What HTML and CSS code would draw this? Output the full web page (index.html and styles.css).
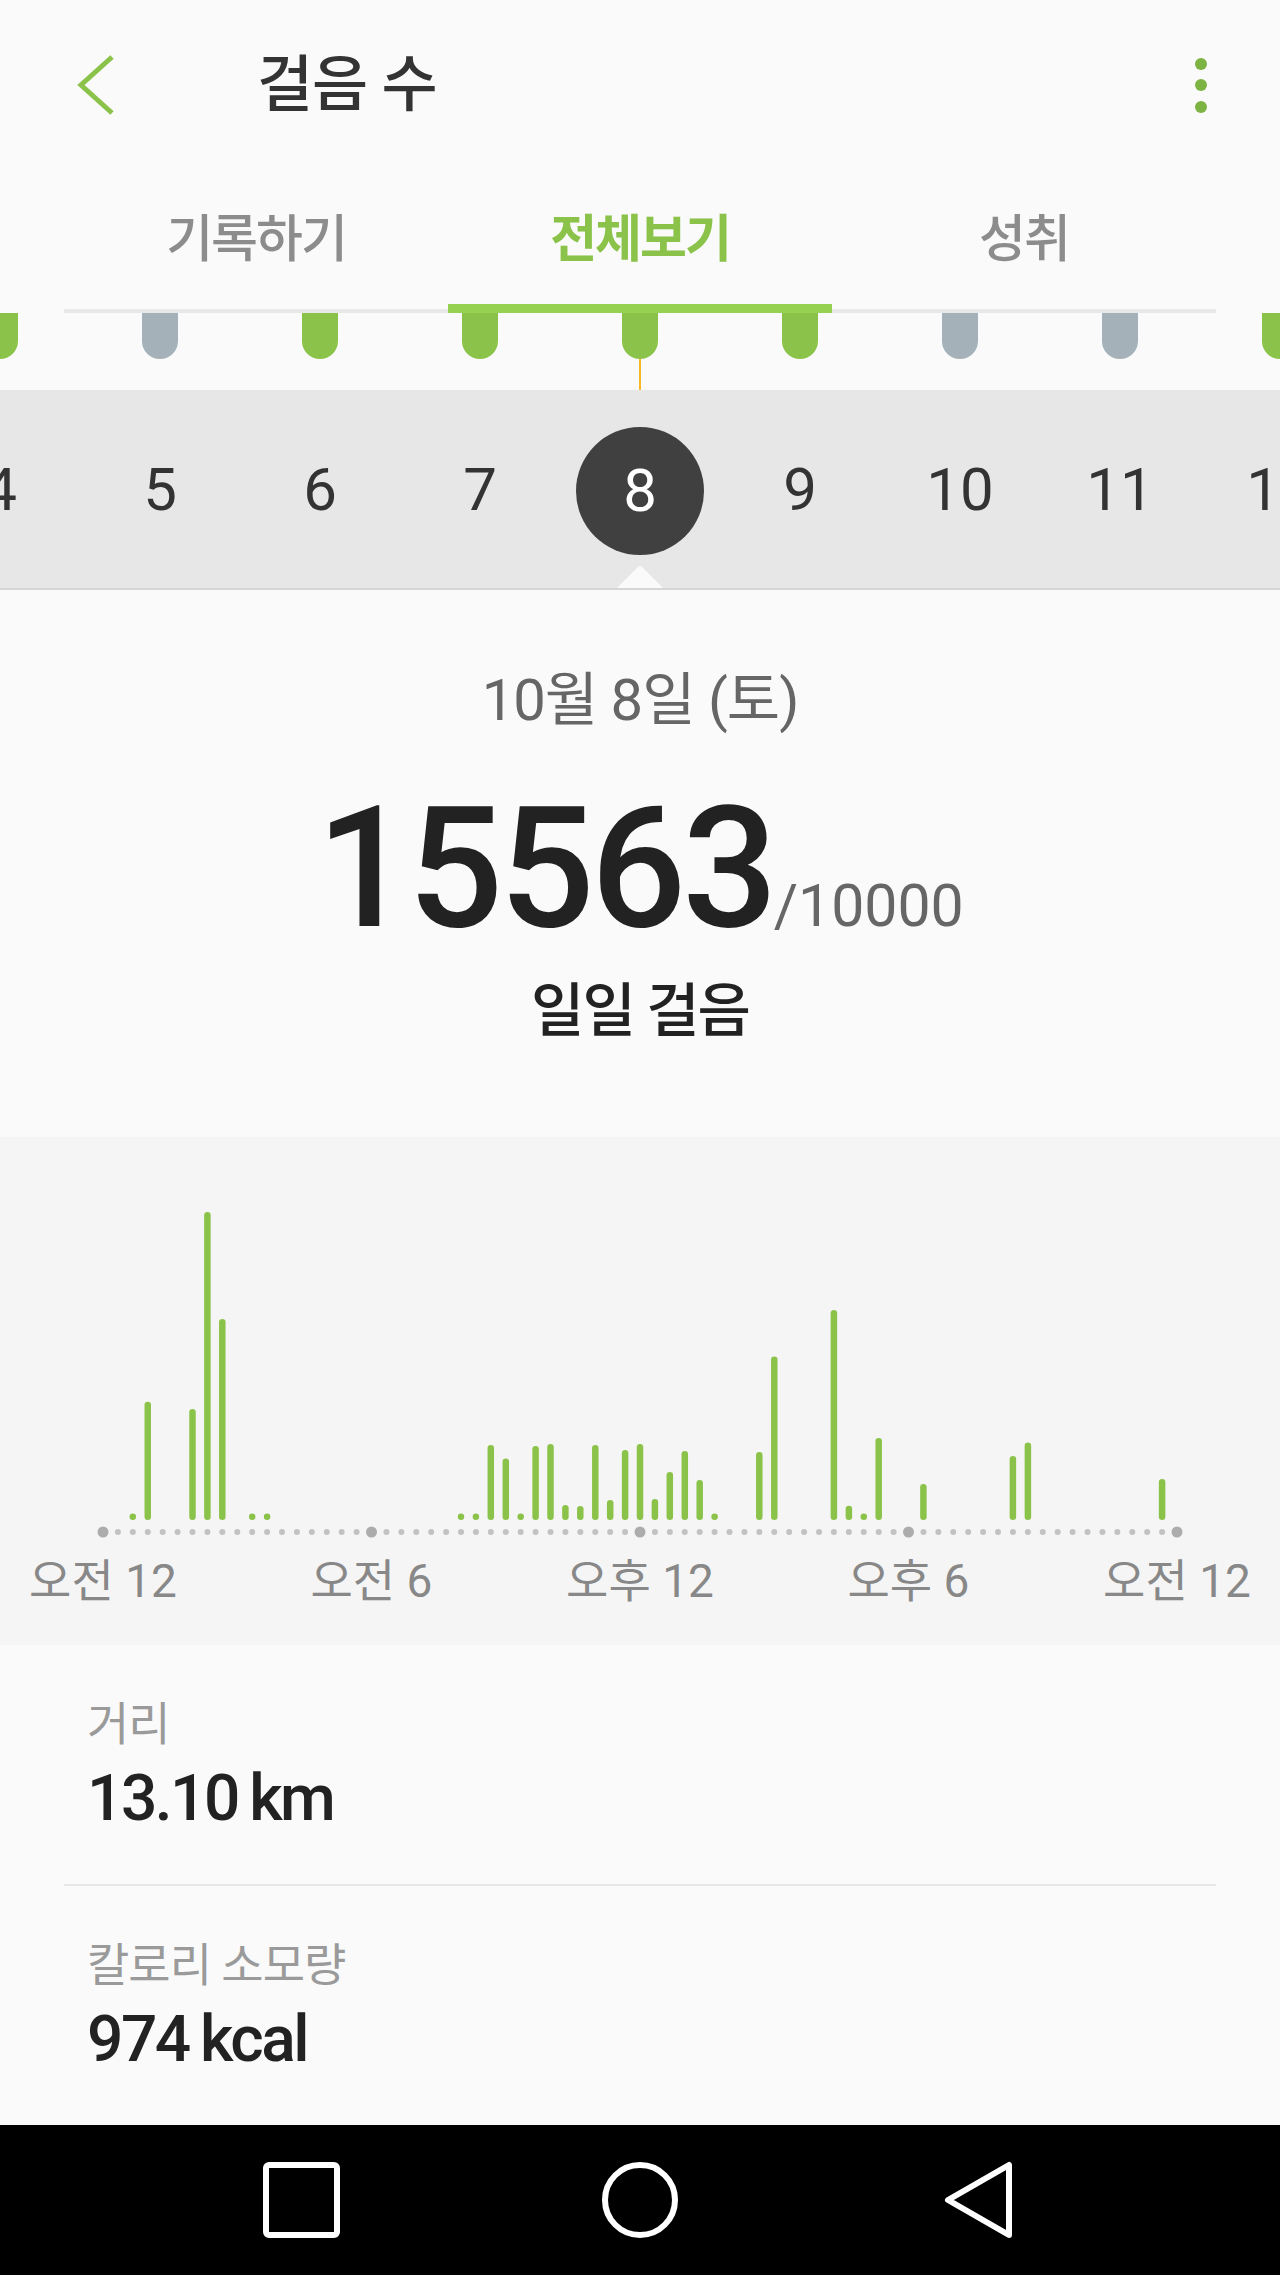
FILE: index.html
```html
<!DOCTYPE html>
<html lang="ko">
<head>
    <meta charset="UTF-8">
    <meta name="viewport" content="width=device-width, initial-scale=1.0">
    <title>걸음 수</title>
    <link rel="stylesheet" href="styles.css">
</head>
<body>
    <header class="app-bar">
        <button class="back" type="button" aria-label="뒤로">
            <svg width="40" height="64" viewBox="0 0 40 64"><polyline points="36,4 5,32 36,60" fill="none" stroke="#8bc34a" stroke-width="5"/></svg>
        </button>
        <h1 class="title">걸음 수</h1>
        <div class="menu" aria-label="더보기"><span></span><span></span><span></span></div>
    </header>

    <nav class="tabs">
        <div class="tab">기록하기</div>
        <div class="tab active">전체보기</div>
        <div class="tab">성취</div>
    </nav>

    <!-- goal markers for each day -->
    <div class="strip">
        <div class="track">
            <div class="slot"><span class="pin done"></span></div>
            <div class="slot"><span class="pin"></span></div>
            <div class="slot"><span class="pin done"></span></div>
            <div class="slot"><span class="pin done"></span></div>
            <div class="slot"><span class="pin done current"></span></div>
            <div class="slot"><span class="pin done"></span></div>
            <div class="slot"><span class="pin"></span></div>
            <div class="slot"><span class="pin"></span></div>
            <div class="slot"><span class="pin done"></span></div>
        </div>
    </div>

    <div class="days">
        <div class="track">
            <div class="day">4</div>
            <div class="day">5</div>
            <div class="day">6</div>
            <div class="day">7</div>
            <div class="day"><span class="today">8</span></div>
            <div class="day">9</div>
            <div class="day">10</div>
            <div class="day">11</div>
            <div class="day">12</div>
        </div>
    </div>

    <section class="summary">
        <div class="date">10월 8일 (토)</div>
        <div class="steps">15563<span class="goal">/10000</span></div>
        <div class="caption">일일 걸음</div>
    </section>

    <section class="chart">
        <svg width="1280" height="508" viewBox="0 0 1280 508">
            <line class="axis" x1="103" y1="395" x2="1177" y2="395"/>
            <circle class="tick" cx="103" cy="395" r="5.5"/>
            <circle class="tick" cx="371.5" cy="395" r="5.5"/>
            <circle class="tick" cx="640" cy="395" r="5.5"/>
            <circle class="tick" cx="908.5" cy="395" r="5.5"/>
            <circle class="tick" cx="1177" cy="395" r="5.5"/>

            <g class="bars">
                <circle cx="132.8" cy="379.75" r="3.25"/>
                <line x1="147.75" y1="268" x2="147.75" y2="379.75"/>
                <line x1="192.5" y1="275.25" x2="192.5" y2="379.75"/>
                <line x1="207.4" y1="78.25" x2="207.4" y2="379.75"/>
                <line x1="222.3" y1="185.25" x2="222.3" y2="379.75"/>
                <circle cx="252.2" cy="379.75" r="3.25"/>
                <circle cx="267.1" cy="379.75" r="3.25"/>
                <circle cx="461" cy="379.75" r="3.25"/>
                <circle cx="475.9" cy="379.75" r="3.25"/>
                <line x1="490.8" y1="311.25" x2="490.8" y2="379.75"/>
                <line x1="505.8" y1="324.75" x2="505.8" y2="379.75"/>
                <circle cx="520.7" cy="379.75" r="3.25"/>
                <line x1="535.6" y1="312.25" x2="535.6" y2="379.75"/>
                <line x1="550.5" y1="310.25" x2="550.5" y2="379.75"/>
                <line x1="565.4" y1="371.25" x2="565.4" y2="379.75"/>
                <line x1="580.3" y1="372.25" x2="580.3" y2="379.75"/>
                <line x1="595.3" y1="311.25" x2="595.3" y2="379.75"/>
                <line x1="610.2" y1="366.25" x2="610.2" y2="379.75"/>
                <line x1="625.1" y1="316.25" x2="625.1" y2="379.75"/>
                <line x1="640" y1="310.25" x2="640" y2="379.75"/>
                <line x1="654.9" y1="365.25" x2="654.9" y2="379.75"/>
                <line x1="669.8" y1="338.25" x2="669.8" y2="379.75"/>
                <line x1="684.8" y1="317.25" x2="684.8" y2="379.75"/>
                <line x1="699.7" y1="346.25" x2="699.7" y2="379.75"/>
                <circle cx="714.6" cy="379.75" r="3.25"/>
                <line x1="759.3" y1="318.25" x2="759.3" y2="379.75"/>
                <line x1="774.3" y1="222.75" x2="774.3" y2="379.75"/>
                <line x1="833.9" y1="176.25" x2="833.9" y2="379.75"/>
                <line x1="848.9" y1="372" x2="848.9" y2="379.75"/>
                <circle cx="863.8" cy="379.75" r="3.25"/>
                <line x1="878.7" y1="304.25" x2="878.7" y2="379.75"/>
                <line x1="923.4" y1="350.25" x2="923.4" y2="379.75"/>
                <line x1="1012.9" y1="322.25" x2="1012.9" y2="379.75"/>
                <line x1="1027.9" y1="308.85" x2="1027.9" y2="379.75"/>
                <line x1="1162.1" y1="345.25" x2="1162.1" y2="379.75"/>
            </g>

            <text class="hour" x="103" y="460">오전 12</text>
            <text class="hour" x="371.5" y="460">오전 6</text>
            <text class="hour" x="640" y="460">오후 12</text>
            <text class="hour" x="908.5" y="460">오후 6</text>
            <text class="hour" x="1177" y="460">오전 12</text>
        </svg>
    </section>

    <section class="details">
        <div class="stat">
            <div class="stat-label">거리</div>
            <div class="stat-value">13.10 km</div>
        </div>
        <div class="stat">
            <div class="stat-label">칼로리 소모량</div>
            <div class="stat-value">974 kcal</div>
        </div>
    </section>

    <footer class="nav-bar">
        <div class="nav-key">
            <svg width="80" height="80" viewBox="0 0 80 80"><rect x="4" y="5" width="71" height="70" rx="3" fill="none" stroke="#fff" stroke-width="6"/></svg>
        </div>
        <div class="nav-key">
            <svg width="80" height="80" viewBox="0 0 80 80"><circle cx="40" cy="40" r="35" fill="none" stroke="#fff" stroke-width="6"/></svg>
        </div>
        <div class="nav-key">
            <svg width="80" height="80" viewBox="0 0 80 80"><polygon points="10,40 71,5 71,75" fill="none" stroke="#fff" stroke-width="6" stroke-linejoin="round"/></svg>
        </div>
    </footer>
</body>
</html>
```

FILE: styles.css
```css
/* Global */
body {
    margin: 0;
    background: #fafafa;
    font-family: Roboto, "Noto Sans CJK KR", sans-serif;
    color: #222;
    overflow-x: hidden;
}

/* App bar */
.app-bar {
    display: flex;
    align-items: center;
    height: 170px;
    padding: 0 73px 0 76px;
}

.back {
    display: flex;
    padding: 0;
    border: none;
    background: none;
}

.title {
    margin: 0 0 0 141px;
    font-size: 61px;
    font-weight: 500;
    line-height: 70px;
    color: #333;
    letter-spacing: -1px;
}

.menu {
    margin-left: auto;
    display: flex;
    flex-direction: column;
    gap: 9.5px;
}

.menu span {
    width: 12px;
    height: 12px;
    border-radius: 50%;
    background: #7cb342;
}

/* Tabs */
.tabs {
    display: grid;
    grid-template-columns: repeat(3, 1fr);
    margin: 0 64px;
    border-bottom: 4px solid #e8e8e8;
}

.tab {
    position: relative;
    padding: 40px 0 39px;
    text-align: center;
    font-size: 51px;
    font-weight: 500;
    line-height: 60px;
    letter-spacing: -2px;
    color: #8c8c8c;
}

.tab.active {
    color: #8bc34a;
    font-weight: 700;
}

.tab.active::after {
    content: "";
    position: absolute;
    left: 0;
    right: 0;
    bottom: -4px;
    height: 9px;
    background: #96d151;
}

/* Day strips */
.strip,
.days {
    overflow: hidden;
}

.track {
    display: flex;
    width: 1440px;
    margin-left: -80px;
}

.slot {
    width: 160px;
    height: 77px;
    display: flex;
    justify-content: center;
}

.pin {
    position: relative;
    width: 36px;
    height: 46px;
    border-radius: 0 0 18px 18px;
    background: #a4b1b8;
}

.pin.done {
    background: #8bc34a;
}

.pin.current::after {
    content: "";
    position: absolute;
    top: 46px;
    left: 17px;
    width: 2px;
    height: 31px;
    background: #f7b928;
}

.days {
    position: relative;
    background: #e7e7e7;
    border-bottom: 2px solid #d6d6d6;
}

.days::after {
    content: "";
    position: absolute;
    left: 623px;
    bottom: -18px;
    width: 34px;
    height: 34px;
    border-radius: 4px 0 0 0;
    background: #fafafa;
    transform: rotate(45deg);
}

.day {
    width: 160px;
    height: 198px;
    display: flex;
    align-items: center;
    justify-content: center;
    font-size: 60px;
    color: #333;
}

.today {
    width: 128px;
    height: 128px;
    margin-top: 3px;
    border-radius: 50%;
    background: #404040;
    color: #fff;
    display: flex;
    align-items: center;
    justify-content: center;
}

/* Summary */
.summary {
    text-align: center;
    padding: 78px 0 91px;
}

.date {
    font-size: 58px;
    font-weight: 400;
    line-height: 64px;
    color: #666;
    letter-spacing: -1px;
}

.steps {
    margin-top: 53px;
    font-size: 168px;
    font-weight: 500;
    line-height: 168px;
    letter-spacing: -4px;
    color: #222;
}

.goal {
    font-size: 59px;
    font-weight: 400;
    line-height: 1;
    letter-spacing: 0;
    color: #666;
}

.caption {
    margin-top: 23px;
    font-size: 58px;
    font-weight: 500;
    line-height: 70px;
    letter-spacing: -2px;
    color: #222;
}

/* Chart */
.chart {
    background: #f5f5f5;
}

.chart svg {
    display: block;
}

.axis {
    stroke: #c2c2c2;
    stroke-width: 6;
    stroke-linecap: round;
    stroke-dasharray: 0 14.917;
}

.tick {
    fill: #acacac;
}

.bars line {
    stroke: #8bc34a;
    stroke-width: 6.5;
    stroke-linecap: round;
}

.bars circle {
    fill: #8bc34a;
}

.hour {
    font-family: Roboto, "Noto Sans CJK KR", sans-serif;
    font-size: 46px;
    fill: #888;
    text-anchor: middle;
}

/* Details */
.details {
    margin: 0 64px;
}

.stat {
    padding: 53px 23px 49px;
}

.stat + .stat {
    border-top: 2px solid #e6e6e6;
}

.stat-label {
    font-size: 46px;
    line-height: 52px;
    letter-spacing: -1px;
    color: #9a9a9a;
}

.stat-value {
    margin-top: 13px;
    font-size: 64px;
    font-weight: 500;
    line-height: 72px;
    letter-spacing: -2.5px;
    word-spacing: -2px;
    color: #222;
}

/* System navigation */
.nav-bar {
    display: flex;
    justify-content: center;
    align-items: center;
    height: 150px;
    background: #000;
}

.nav-key {
    width: 338px;
    display: flex;
    justify-content: center;
}

.nav-key svg {
    display: block;
}
```
